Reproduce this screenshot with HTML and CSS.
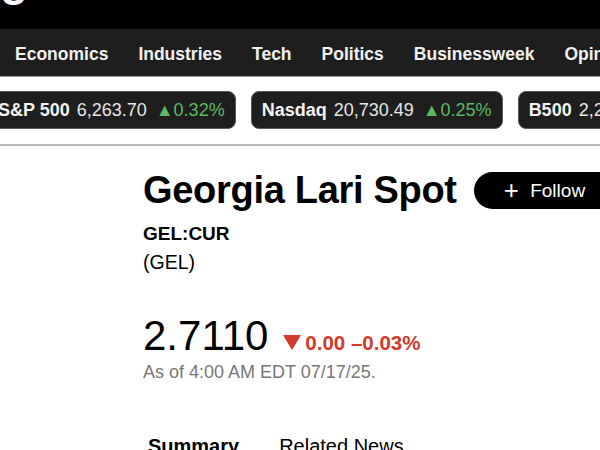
FILE: index.html
```html
<!DOCTYPE html>
<html lang="en">
<head>
    <meta charset="UTF-8">
    <meta name="viewport" content="width=device-width, initial-scale=1.0">
    <title>Georgia Lari Spot</title>
    <link rel="stylesheet" href="styles.css">
</head>
<body>
    <header class="topbar">
        <div class="logo">g</div>
    </header>

    <nav class="sections">
        <a href="#">Economics</a>
        <a href="#">Industries</a>
        <a href="#">Tech</a>
        <a href="#">Politics</a>
        <a href="#">Businessweek</a>
        <a href="#">Opinion</a>
    </nav>

    <div class="tickers">
        <div class="ticker">
            <span class="name">S&amp;P 500</span>
            <span class="value">6,263.70</span>
            <span class="change up">&#9650;0.32%</span>
        </div>
        <div class="ticker">
            <span class="name">Nasdaq</span>
            <span class="value">20,730.49</span>
            <span class="change up">&#9650;0.25%</span>
        </div>
        <div class="ticker">
            <span class="name">B500</span>
            <span class="value">2,214.05</span>
            <span class="change up">&#9650;0.41%</span>
        </div>
    </div>

    <main class="quote">
        <div class="title-row">
            <h1>Georgia Lari Spot</h1>
            <button class="follow"><span class="plus">+</span> Follow</button>
        </div>
        <p class="symbol">GEL:CUR</p>
        <p class="currency">(GEL)</p>

        <div class="price-row">
            <span class="price">2.7110</span>
            <span class="delta down"><span class="arrow"></span>0.00 &ndash;0.03%</span>
        </div>
        <p class="asof">As of 4:00 AM EDT 07/17/25.</p>

        <div class="tabs">
            <a href="#" class="active">Summary</a>
            <a href="#">Related News</a>
        </div>
    </main>
</body>
</html>
```

FILE: styles.css
```css
body {
    font-family: "Liberation Sans", Arial, sans-serif;
    margin: 0;
    padding: 0;
    background-color: #fff;
    color: #000;
    overflow: hidden;
}

.topbar {
    height: 29px;
    background-color: #000;
    overflow: hidden;
}

.logo {
    color: #fff;
    font-size: 46px;
    font-weight: bold;
    line-height: 46px;
    margin-top: -44px;
}

.sections {
    height: 48px;
    box-sizing: border-box;
    padding: 4px 0 0 15px;
    background-color: #1e1e1e;
    border-bottom: 1px solid #9a9a9a;
    display: flex;
    align-items: center;
    gap: 30px;
    white-space: nowrap;
    overflow: hidden;
}

.sections a {
    color: #f0f0f0;
    text-decoration: none;
    font-size: 17.5px;
    font-weight: bold;
}

.tickers {
    display: flex;
    gap: 15px;
    padding: 14px 0 15px;
    margin-left: -13px;
    border-bottom: 2px solid #b4b4b4;
    white-space: nowrap;
    overflow: hidden;
}

.ticker {
    flex-shrink: 0;
    display: flex;
    align-items: center;
    gap: 7px;
    height: 38px;
    padding: 1px 10px 0;
    box-sizing: border-box;
    background-color: #1e1e1e;
    border: 1px solid #5a5a5a;
    border-radius: 8px;
    font-size: 18px;
    color: #e6e6e6;
}

.ticker .name {
    font-weight: bold;
    color: #f2f2f2;
}

.ticker .change {
    margin-left: 2px;
}

.up {
    color: #5cb860;
}

.down {
    color: #d33a2c;
}

.quote {
    padding-left: 143px;
}

.title-row {
    display: flex;
    align-items: center;
    gap: 17px;
    margin-top: 22px;
    white-space: nowrap;
}

h1 {
    margin: 0;
    font-size: 38px;
    letter-spacing: -0.3px;
    line-height: 44px;
}

.follow {
    flex-shrink: 0;
    height: 37px;
    width: 160px;
    padding: 0 0 0 30px;
    text-align: left;
    border: none;
    border-radius: 19px;
    background-color: #000;
    color: #fff;
    font-family: inherit;
    font-size: 19px;
}

.follow .plus {
    font-size: 26px;
    font-weight: 300;
    margin-right: 6px;
    vertical-align: -2px;
}

.symbol {
    margin: 11px 0 0;
    font-size: 19px;
    font-weight: bold;
    line-height: 22px;
}

.currency {
    margin: 6px 0 0;
    font-size: 19.5px;
    line-height: 22px;
}

.price-row {
    display: flex;
    align-items: baseline;
    gap: 15px;
    margin-top: 40px;
}

.price {
    font-size: 42px;
    line-height: 46px;
}

.delta {
    font-size: 20.5px;
    font-weight: bold;
}

.delta .arrow {
    display: inline-block;
    width: 0;
    height: 0;
    border-left: 9px solid transparent;
    border-right: 9px solid transparent;
    border-top: 15px solid #d33a2c;
    margin-right: 4px;
}

.asof {
    margin: 3px 0 0;
    font-size: 18px;
    color: #777;
    line-height: 20px;
}

.tabs {
    display: flex;
    gap: 40px;
    margin-top: 53px;
    padding-left: 5px;
}

.tabs a {
    font-size: 20px;
    color: #000;
    text-decoration: none;
}

.tabs a.active {
    font-weight: bold;
}
```
